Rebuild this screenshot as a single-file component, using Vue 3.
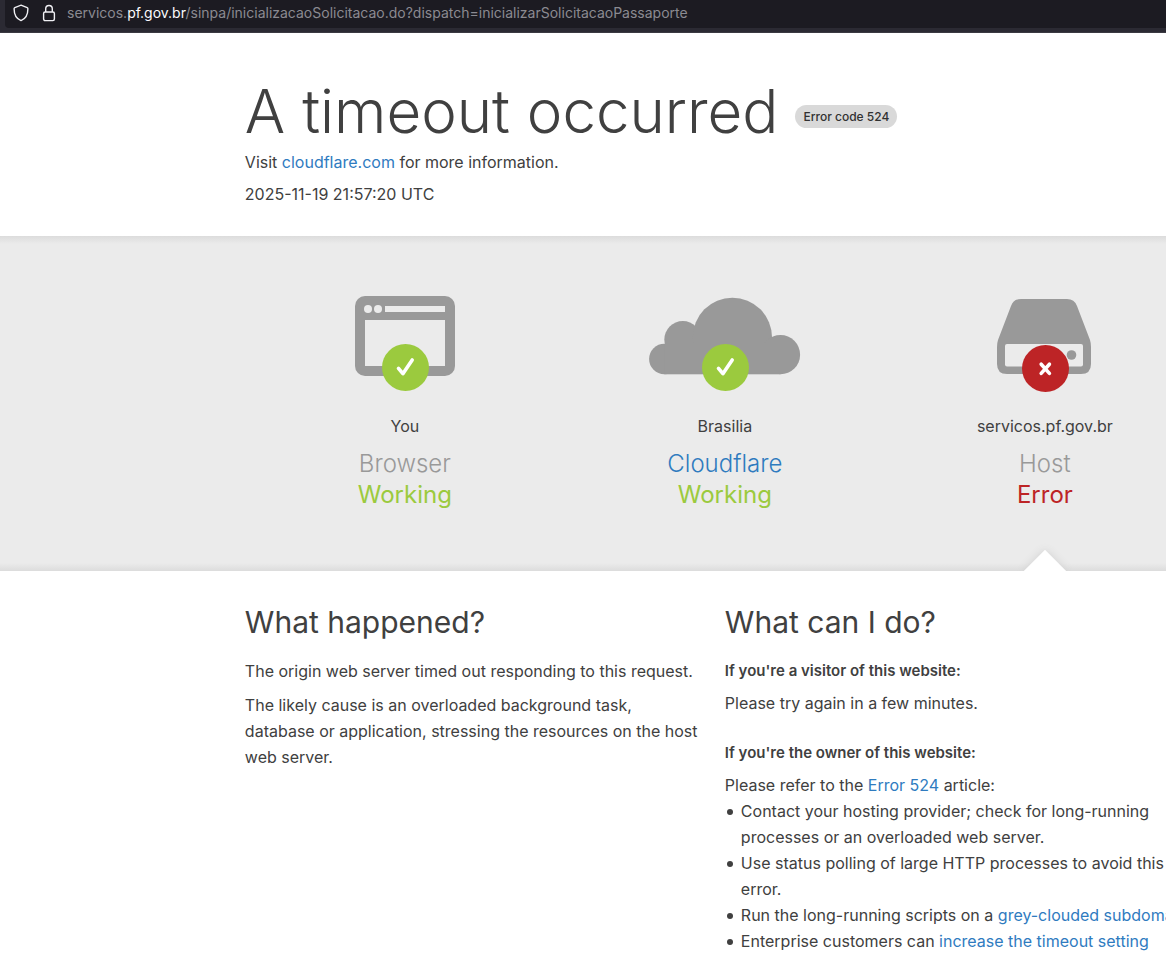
<script setup>
const nodes = [
  { id: 'browser', place: 'You', name: 'Browser', status: 'Working', ok: true },
  { id: 'cloud', place: 'Brasilia', name: 'Cloudflare', status: 'Working', ok: true, link: true },
  { id: 'host', place: 'servicos.pf.gov.br', name: 'Host', status: 'Error', ok: false },
]
</script>

<template>
  <div class="page">
    <div class="toolbar">
      <div class="address">
        <svg class="shield" viewBox="0 0 16 18" width="16" height="18" aria-hidden="true">
          <path d="M8 1.2 14.2 3.6 Q14.9 3.9 14.9 4.7 C14.9 10.5 12.3 14.9 8 16.6 C3.7 14.9 1.1 10.5 1.1 4.7 Q1.1 3.9 1.8 3.6 Z" />
        </svg>
        <svg class="lock" viewBox="0 0 14 18" width="14" height="18" aria-hidden="true">
          <rect x="1.6" y="8" width="10.8" height="8.6" rx="1.5" />
          <path d="M3.7 8V4.8a3.3 3.3 0 0 1 6.6 0V8" />
        </svg>
        <span class="url">servicos.<b>pf.gov.br</b>/sinpa/inicializacaoSolicitacao.do?dispatch=inicializarSolicitacaoPassaporte</span>
      </div>
    </div>

    <header class="intro">
      <h1><span>A timeout occurred</span><span class="code">Error code 524</span></h1>
      <p>Visit <a href="#">cloudflare.com</a> for more information.</p>
      <p class="date">2025-11-19 21:57:20 UTC</p>
    </header>

    <section class="band">
      <div class="nodes">
        <div v-for="node in nodes" :key="node.id" class="node" :class="node.id">
          <div class="picture">
            <svg v-if="node.id === 'browser'" viewBox="0 0 100 80" width="100" height="80" aria-hidden="true">
              <rect width="100" height="80" rx="10" fill="#999" />
              <rect x="10" y="24" width="80" height="46" fill="#ebebeb" />
              <rect x="30" y="10" width="60" height="6" fill="#ebebeb" />
              <circle cx="13" cy="13" r="4" fill="#ebebeb" />
              <circle cx="23" cy="13" r="4" fill="#ebebeb" />
            </svg>
            <svg v-else-if="node.id === 'cloud'" viewBox="0 0 152 80" width="152" height="80" fill="#999" aria-hidden="true">
              <circle cx="15.400" cy="63" r="15.300" />
              <circle cx="33.800" cy="43.500" r="18.500" />
              <circle cx="83.400" cy="41.300" r="39.600" />
              <circle cx="131.500" cy="58.700" r="19.600" />
              <rect x="15.400" y="48" width="116" height="30.300" />
            </svg>
            <svg v-else viewBox="0 0 96 80" width="96" height="80" aria-hidden="true">
              <path fill="#999" d="M24 3h46q7.500 0 10 7L93 44q1 3 1 7v17q0 10-10 10H10Q0 78 0 68V51q0-4 1-7L14 10q2.500-7 10-7Z" />
              <rect x="8" y="48" width="78" height="22.500" rx="2" fill="#ebebeb" />
              <circle cx="74.500" cy="59" r="4.800" fill="#999" />
            </svg>
            <svg class="badge" viewBox="0 0 48 48" width="48" height="48" aria-hidden="true">
              <circle cx="24.500" :cy="node.ok ? 23.5 : 24.5" r="23.500" :fill="node.ok ? '#9bca3e' : '#bd2426'" />
              <path v-if="node.ok" d="M17.500 24.300 21.900 29.700 31.200 15.900" class="mark" />
              <path v-else d="M20.200 20.200 28.400 29.400M28.400 20.200 20.200 29.400" class="mark" />
            </svg>
          </div>
          <span class="place">{{ node.place }}</span>
          <h3><a v-if="node.link" href="#">{{ node.name }}</a><template v-else>{{ node.name }}</template></h3>
          <span class="status" :class="{ failed: !node.ok }">{{ node.status }}</span>
          <span v-if="!node.ok" class="caret"></span>
        </div>
      </div>
    </section>

    <main class="details">
      <section class="column">
        <h2>What happened?</h2>
        <p>The origin web server timed out responding to this request.</p>
        <p>The likely cause is an overloaded background task, database or application, stressing the resources on the host web server.</p>
      </section>
      <section class="column">
        <h2>What can I do?</h2>
        <h4>If you're a visitor of this website:</h4>
        <p>Please try again in a few minutes.</p>
        <h4 class="owner">If you're the owner of this website:</h4>
        <p>Please refer to the <a href="#">Error 524</a> article:</p>
        <ul>
          <li>Contact your hosting provider; check for long-running processes or an overloaded web server.</li>
          <li>Use status polling of large HTTP processes to avoid this error.</li>
          <li class="keep">Run the long-running scripts on a <a href="#">grey-clouded subdomain</a></li>
          <li>Enterprise customers can <a href="#">increase the timeout setting</a></li>
        </ul>
      </section>
    </main>
  </div>
</template>

<style>
html {
  overflow: hidden;
}
body {
  margin: 0;
  background: #fff;
}
</style>

<style scoped>
.page {
  height: 100vh;
  overflow: hidden;
  background: #fff;
  color: #404040;
  font-family: Inter, "Liberation Sans", sans-serif;
  font-size: 16px;
  line-height: 24px;
}
h1, h2, h3, h4, p, ul {
  margin: 0;
  padding: 0;
}
a {
  color: #2f7bbf;
  text-decoration: none;
}
.toolbar {
  box-sizing: border-box;
  height: 33px;
  padding-left: 5px;
  background: #2b2a33;
  border-bottom: 1px solid #3b3a42;
}
.address {
  box-sizing: border-box;
  display: flex;
  align-items: center;
  height: 28px;
  padding: 0 0 3px 8px;
  background: #1c1b22;
  border-radius: 0 0 0 4px;
}
.address svg {
  flex: none;
  fill: none;
  stroke: #f0f0f4;
  stroke-width: 1.4;
}
.lock {
  margin-left: 13px;
}
.url {
  margin-left: 11px;
  font-size: 14px;
  color: #8b8a91;
  white-space: nowrap;
}
.url b {
  font-weight: 400;
  color: #fbfbfe;
}
.intro {
  padding: 48px 0 30px 21%;
}
h1 {
  display: flex;
  align-items: center;
  gap: 17px;
  margin-bottom: 9px;
  font-size: 60px;
  line-height: 60px;
  font-weight: 300;
  white-space: nowrap;
}
.code {
  margin-top: 11px;
  padding: 0 8px;
  border-radius: 12px;
  background: #d9d9d9;
  color: #313131;
  font-size: 12px;
  line-height: 23px;
  font-weight: 500;
}
.date {
  margin-top: 8px;
}
.band {
  padding-left: 21%;
  background:
    linear-gradient(#dcdcdc, #ebebeb00) top / 100% 8px no-repeat,
    linear-gradient(#ebebeb00, #dcdcdc) bottom / 100% 8px no-repeat,
    #ebebeb;
  overflow: hidden;
}
.nodes {
  display: grid;
  grid-template-columns: repeat(3, 320px);
}
.node {
  position: relative;
  display: flex;
  flex-direction: column;
  align-items: center;
  padding: 60px 0 61px;
}
.picture {
  position: relative;
  height: 96px;
  margin-bottom: 22px;
}
.badge {
  position: absolute;
  left: 50%;
  bottom: 0;
  transform: translateX(-50%);
}
.mark {
  fill: none;
  stroke: #fff;
  stroke-width: 3.6;
  stroke-linecap: round;
  stroke-linejoin: round;
}
h3, .status {
  font-size: 24px;
  line-height: 31px;
}
h3 {
  margin-top: 10px;
  color: #999;
  font-weight: 300;
}
.status {
  color: #9bca3e;
}
.status.failed {
  color: #bd2426;
}
.caret {
  position: absolute;
  left: 50%;
  bottom: -15px;
  width: 30px;
  height: 30px;
  margin-left: -15px;
  background: #fff;
  box-shadow: 0 0 8px #d0d0d0;
  transform: rotate(45deg);
}
.details {
  display: grid;
  grid-template-columns: repeat(2, 480px);
  padding: 32px 0 0 21%;
}
.column {
  box-sizing: border-box;
  padding-right: 24px;
}
h2 {
  margin-bottom: 16px;
  font-size: 30px;
  line-height: 39px;
  font-weight: 400;
}
.column p, li {
  line-height: 26px;
}
.column p + p {
  margin-top: 8px;
}
h4 {
  margin-bottom: 6px;
  font-size: 15px;
  line-height: 26px;
  font-weight: 600;
}
h4.owner {
  margin-top: 24px;
}
ul {
  padding-left: 16px;
  list-style: none;
}
li {
  position: relative;
}
li::before {
  content: "";
  position: absolute;
  top: 11px;
  left: -14px;
  width: 6px;
  height: 6px;
  border-radius: 50%;
  background: #404040;
}
.keep {
  white-space: nowrap;
}
</style>
